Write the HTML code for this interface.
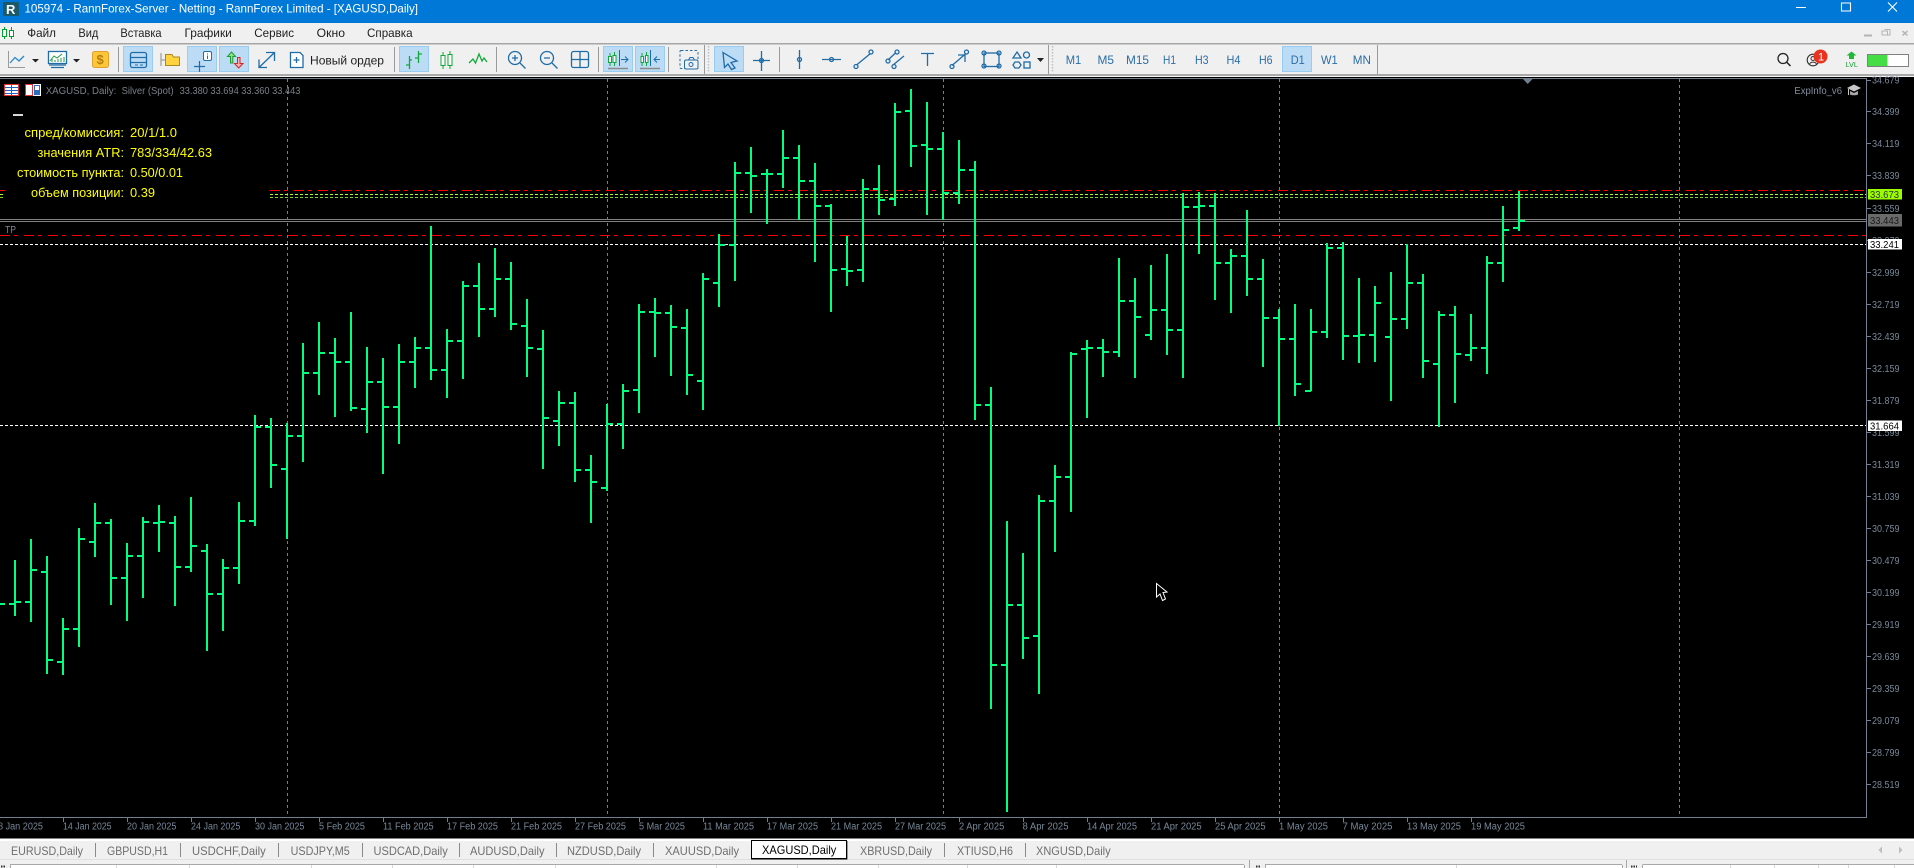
<!DOCTYPE html>
<html><head><meta charset="utf-8"><title>XAGUSD,Daily</title>
<style>
html,body{margin:0;padding:0;background:#000;width:1914px;height:868px;overflow:hidden}
svg{display:block;font-family:"Liberation Sans","DejaVu Sans",sans-serif}
.a{font-size:10px;fill:#778899}
.m{font-size:12px;fill:#1e1e1e}
.tf{font-size:12px;fill:#2b6ea8}
.t{font-size:12px;fill:#6e6e6e}
.y{font-size:13px;fill:#ffff00}
.ic{fill:none;stroke:#1f6ca8;stroke-width:1.3}
</style></head><body>
<svg width="1914" height="868" viewBox="0 0 1914 868" xmlns="http://www.w3.org/2000/svg">
<!-- title bar -->
<rect width="1914" height="23" fill="#0078d7"/>
<rect x="3" y="2" width="16" height="14" rx="1" fill="#1b5a6b"/>
<text x="6" y="14" font-size="13" font-weight="bold" fill="#fff">R</text>
<text x="24.5" y="12.5" font-size="12" fill="#fff" textLength="393.5" lengthAdjust="spacingAndGlyphs">105974 - RannForex-Server - Netting - RannForex Limited - [XAGUSD,Daily]</text>
<path d="M1796 7.5H1806M1841.5 3H1850.5V11H1841.5ZM1888 2.5L1897 11.5M1897 2.5L1888 11.5" stroke="#fff" stroke-width="1.1" fill="none"/>
<!-- menu -->
<rect y="23" width="1914" height="21" fill="#f0f0f0"/>
<rect y="43" width="1914" height="1.5" fill="#a6a6a6"/>
<path d="M4.5 27V39M11.5 27V39" stroke="#00a030"/><rect x="2.5" y="29.5" width="4" height="7" fill="#fff" stroke="#00a030"/><rect x="9.5" y="30.5" width="4" height="6" fill="#fff" stroke="#00a030"/>
<text class="m" x="27.3" y="37" textLength="28.7" lengthAdjust="spacingAndGlyphs">Файл</text>
<text class="m" x="78.4" y="37" textLength="20" lengthAdjust="spacingAndGlyphs">Вид</text>
<text class="m" x="120.4" y="37" textLength="41.2" lengthAdjust="spacingAndGlyphs">Вставка</text>
<text class="m" x="184.5" y="37" textLength="47.3" lengthAdjust="spacingAndGlyphs">Графики</text>
<text class="m" x="254.3" y="37" textLength="39.7" lengthAdjust="spacingAndGlyphs">Сервис</text>
<text class="m" x="316.7" y="37" textLength="28.3" lengthAdjust="spacingAndGlyphs">Окно</text>
<text class="m" x="367" y="37" textLength="45.6" lengthAdjust="spacingAndGlyphs">Справка</text>
<path d="M1864 35.5H1872" stroke="#b4b4b4" stroke-width="2"/><path d="M1884.5 29.5H1890V35H1882V31H1887.5V35" stroke="#b4b4b4" fill="none"/><path d="M1902.5 31L1907.5 35.5M1907.5 31L1902.5 35.5" stroke="#b4b4b4" stroke-width="1.5"/>
<!-- toolbar -->
<rect y="44.5" width="1914" height="30" fill="#f0f0f0"/>
<rect y="74" width="1914" height="2" fill="#a8a8a8"/>
<rect y="76" width="1914" height="1" fill="#f4f4f4"/>
<g fill="#bcdcf5" stroke="#98ccf2">
<rect x="123.5" y="46.5" width="29" height="25"/><rect x="187.5" y="46.5" width="29" height="25"/><rect x="219.5" y="46.5" width="29" height="25"/><rect x="399.5" y="46.5" width="29" height="25"/><rect x="603.5" y="46.5" width="29" height="25"/><rect x="635.5" y="46.5" width="29" height="25"/><rect x="714.5" y="46.5" width="29" height="25"/><rect x="1282.5" y="46.5" width="29" height="25"/>
</g>
<path d="M118.5 47V72M394.5 47V72M496.5 47V72M598.5 47V72M668.5 47V72M704.5 45V74M779.5 47V72M1048.5 45V74M1377.5 45V74" stroke="#9a9a9a"/>
<path d="M708.5 46V73M1052.5 46V73" stroke="#c0c0c0" stroke-width="1.5" stroke-dasharray="1.5 1.5"/>
<!-- line chart -->
<path d="M8.5 51V67.5H25" stroke="#9a9a9a" fill="none"/><path d="M10 63L15 57.5L19 61L24 56" stroke="#2a86cc" stroke-width="1.3" fill="none"/>
<path d="M32 59H39L35.5 62.5Z" fill="#222"/>
<!-- template -->
<rect x="48.5" y="51.5" width="18" height="12" fill="#fff" stroke="#1f6ca8" stroke-width="1.3"/><path d="M50 61L54 56L57 58L62 54" stroke="#1f9a40" fill="none"/><path d="M52 62V59M55 62V60M58 62V59M61 62V58M64 62V57" stroke="#1f9a40"/><path d="M49 65H66M51 67.5H64" stroke="#1f6ca8" stroke-width="1.3"/>
<path d="M73 59H80L76.5 62.5Z" fill="#222"/>
<!-- dollar -->
<rect x="92.5" y="51.5" width="16" height="16" rx="2" fill="#ffc738" stroke="#e0a030"/><text x="96.5" y="64" font-size="13" font-weight="bold" fill="#b57e10">$</text>
<!-- window -->
<rect x="130.5" y="52.5" width="16" height="15" rx="2" class="ic"/><path d="M130.5 57.5H146.5M130.5 62.5H146.5" class="ic"/><path d="M135 65H138M140 65H143" stroke="#1f6ca8"/>
<!-- folder -->
<path d="M161 53V66M161 60H165" stroke="#8c8c8c" fill="none"/><path d="M165.5 54.5H172L173.5 57H179.5V65.5H165.5Z" fill="#ffd23e" stroke="#a88a20"/>
<!-- cross i -->
<path d="M194 66.5H205M199.5 61V72" stroke="#1f6ca8" stroke-width="1.2"/><rect x="203.5" y="51.5" width="8" height="9" rx="1.5" fill="#fff" stroke="#1f6ca8"/><path d="M207.5 53.5V54.5M207.5 55.5V59" stroke="#1f6ca8"/>
<!-- green/red arrows -->
<path d="M230.5 63V56.5H227.5L231.5 52L235.5 56.5H232.8V63Z" fill="#8fe08f" stroke="#1c9a34" stroke-width="1"/><path d="M237.5 57.5V63.5H234.5L238.7 68L243 63.5H240V57.5Z" fill="#ffb0b0" stroke="#d02828" stroke-width="1"/>
<!-- resize -->
<path d="M259 67.5L274.5 52.5M266 52.5H274.5V61M259 59.5V67.5H267" class="ic"/>
<!-- new order -->
<path d="M290.5 52.5H300L303 55.5V67.5H290.5Z" fill="#fff" stroke="#1f6ca8" stroke-width="1.3"/><path d="M296.5 57V63M293.5 60H299.5" stroke="#1f6ca8" stroke-width="1.3"/>
<text x="310" y="64.5" font-size="12" fill="#1e1e1e" textLength="74" lengthAdjust="spacingAndGlyphs">Новый ордер</text>
<!-- bar type -->
<path d="M409.5 56V69M406 65H409.5M409.5 60H412M418.5 51V63M415 58H418.5M418.5 54H422" stroke="#12a838" stroke-width="1.3" fill="none"/>
<path d="M443 52V69M450 51V69" stroke="#12a838"/><rect x="441" y="55.5" width="4" height="10" fill="#fff" stroke="#12a838"/><rect x="448" y="54.5" width="4" height="11" fill="#fff" stroke="#12a838"/>
<path d="M469 63L473 59L475.5 63L479 54L482 61L484 58L487 62" stroke="#12a838" stroke-width="1.3" fill="none"/>
<!-- zoom -->
<circle cx="515" cy="58" r="6.5" class="ic"/><path d="M520 63L525.5 68.5M512 58H518M515 55V61" class="ic"/>
<circle cx="547" cy="58" r="6.5" class="ic"/><path d="M552 63L557.5 68.5M544 58H550" class="ic"/>
<rect x="571.5" y="51.5" width="17" height="16" rx="2" fill="#fff" class="ic"/><path d="M580 51.5V67.5M571.5 59.5H588.5" class="ic"/>
<!-- autoscroll -->
<path d="M610 53V66M614.5 52V66" stroke="#12a838"/><rect x="608.5" y="56.5" width="3" height="6" fill="#fff" stroke="#12a838"/><rect x="613" y="55.5" width="3" height="7" fill="#fff" stroke="#12a838"/><path d="M619.5 50V66M621 59.5H628M625 56.5L628 59.5L625 62.5" stroke="#1f6ca8" fill="none"/><path d="M608 68.5H628" stroke="#8c8c8c" stroke-width="1.5"/>
<path d="M642 53V66M646.5 52V66" stroke="#12a838"/><rect x="641" y="56.5" width="2.5" height="6" fill="#fff" stroke="#12a838"/><rect x="645.5" y="55.5" width="2.5" height="7" fill="#fff" stroke="#12a838"/><path d="M650.5 50V66M654 59.5H660M657 56.5L654 59.5L657 62.5" stroke="#1f6ca8" fill="none"/><path d="M640 68.5H660" stroke="#8c8c8c" stroke-width="1.5"/>
<!-- camera -->
<rect x="680" y="50.5" width="18" height="18" rx="1" fill="none" stroke="#1f6ca8" stroke-dasharray="2.5 2"/><rect x="684.5" y="60" width="13.5" height="9" rx="1.5" fill="#f0f0f0" stroke="#1f6ca8"/><circle cx="691" cy="64.5" r="2" fill="none" stroke="#1f6ca8"/><path d="M688.5 60L690 57.5H693L694.5 60" fill="none" stroke="#1f6ca8"/>
<!-- cursor -->
<path d="M723 52.5L737 61L731 62.5L735 68L731.5 69.5L728 64L724.5 67.5Z" fill="#bcdcf5" class="ic"/>
<!-- crosshair -->
<path d="M761.5 51V71M753 60.5H770" class="ic"/><circle cx="761.5" cy="60.5" r="2" fill="#f0f0f0" class="ic"/>
<!-- vertical, horizontal -->
<path d="M799.5 50V69" class="ic"/><circle cx="799.5" cy="59.5" r="2" fill="#9cc8ea" class="ic"/>
<path d="M822 59.5H841" class="ic"/><circle cx="831.5" cy="59.5" r="2" fill="#9cc8ea" class="ic"/>
<!-- trend -->
<path d="M856.5 65L870.5 53.5" class="ic"/><circle cx="856" cy="66.5" r="2" fill="#9cc8ea" class="ic"/><circle cx="871" cy="52" r="2" fill="#9cc8ea" class="ic"/>
<!-- channel -->
<path d="M888 60L896 52.5M893 65L904 56" class="ic"/><circle cx="888" cy="61" r="2" fill="#9cc8ea" class="ic"/><circle cx="897" cy="52" r="2" fill="#9cc8ea" class="ic"/><circle cx="894" cy="66.5" r="2" fill="#9cc8ea" class="ic"/>
<!-- T -->
<path d="M921 53.5H934M927.5 53.5V66" class="ic"/>
<!-- arrow line -->
<path d="M952 65.5L966 53.5M958 55H965V62" class="ic"/><circle cx="952" cy="66.5" r="2" fill="#9cc8ea" class="ic"/><circle cx="966.5" cy="52" r="2" fill="#9cc8ea" class="ic"/>
<!-- rect -->
<rect x="984" y="53" width="15" height="13.5" class="ic"/><g fill="#9cc8ea" class="ic"><circle cx="984" cy="53" r="2"/><circle cx="999" cy="53" r="2"/><circle cx="984" cy="66" r="2"/><circle cx="999" cy="66" r="2"/></g>
<!-- shapes -->
<path d="M1017 52L1021 58H1013Z" class="ic"/><circle cx="1026.5" cy="55" r="3" class="ic"/><path d="M1015 62H1019L1021 65L1019 68H1015L1013 65Z" class="ic"/><rect x="1024" y="62" width="6" height="6" class="ic"/>
<path d="M1037 58H1044L1040.5 62Z" fill="#222"/>
<!-- timeframes -->
<text class="tf" x="1065.7" y="64" textLength="15.5" lengthAdjust="spacingAndGlyphs">M1</text>
<text class="tf" x="1097.5" y="64" textLength="16.5" lengthAdjust="spacingAndGlyphs">M5</text>
<text class="tf" x="1126" y="64" textLength="23" lengthAdjust="spacingAndGlyphs">M15</text>
<text class="tf" x="1163" y="64" textLength="13" lengthAdjust="spacingAndGlyphs">H1</text>
<text class="tf" x="1195" y="64" textLength="13.6" lengthAdjust="spacingAndGlyphs">H3</text>
<text class="tf" x="1226.5" y="64" textLength="14" lengthAdjust="spacingAndGlyphs">H4</text>
<text class="tf" x="1259" y="64" textLength="13.6" lengthAdjust="spacingAndGlyphs">H6</text>
<text class="tf" x="1290.7" y="64" textLength="14" lengthAdjust="spacingAndGlyphs">D1</text>
<text class="tf" x="1321" y="64" textLength="16.7" lengthAdjust="spacingAndGlyphs">W1</text>
<text class="tf" x="1352.8" y="64" textLength="18.2" lengthAdjust="spacingAndGlyphs">MN</text>
<!-- right side -->
<circle cx="1783" cy="58.5" r="5" fill="none" stroke="#222" stroke-width="1.3"/><path d="M1786.5 62L1790.5 66" stroke="#222" stroke-width="1.5"/>
<circle cx="1813" cy="60" r="5.8" fill="none" stroke="#333" stroke-width="1.1"/><circle cx="1813" cy="58.5" r="2" fill="none" stroke="#333"/><path d="M1809.5 64C1811 61.5 1815 61.5 1816.5 64" fill="none" stroke="#333"/>
<circle cx="1820.5" cy="56.5" r="7" fill="#e8341f"/><text x="1818" y="60.5" font-size="11" fill="#fff">1</text>
<path d="M1849 59V55.5H1846.5L1851.5 51.5L1856.5 55.5H1854V59Z" fill="#20b838"/><text x="1845.5" y="67" font-size="7.5" fill="#14a030" textLength="12.5" lengthAdjust="spacingAndGlyphs">LVL</text>
<rect x="1867.5" y="54.5" width="41" height="12" fill="#fff" stroke="#808080"/><rect x="1868" y="55" width="19.5" height="11" fill="#44dd44"/>

<!-- chart -->
<rect y="77" width="1914" height="761.5" fill="#000"/>
<path d="M0 78.5H1866.5V817.5H0" fill="none" stroke="#708090"/>
<g stroke="#708090" stroke-dasharray="3 3"><path d="M287.5 79V817M607.5 79V817M943.5 79V817M1279.5 79V817M1679.5 79V817"/></g>
<path d="M1523 79H1532.5L1527.7 84Z" fill="#708090"/>
<!-- hlines -->
<path d="M0 190.5H5M270 190.5H1866" stroke="#f00" stroke-dasharray="10 4 4 6"/>
<path d="M0 194.5H3M270 194.5H1866" stroke="#adff2f" stroke-dasharray="3 2"/>
<path d="M0 197.5H3M270 197.5H1866" stroke="#74d420" stroke-dasharray="3 2"/>
<path d="M0 219.5H1866M0 221.5H1866" stroke="#808080"/>
<path d="M0 235.5H1866" stroke="#f00" stroke-dasharray="10 4 4 6"/>
<path d="M0 244.5H1866M0 425.5H1866" stroke="#fff" stroke-dasharray="3 2"/>
<!-- bars -->
<path fill="none" stroke="#00ff7f" stroke-width="2" d="M-1 604H5
M15 560V616M9 604H15M15 602H21
M31 539V622M25 602H31M31 570H37
M47 556V674M41 572H47M47 660H53
M63 618V675M57 662H63M63 629H69
M79 528V647M73 629H79M79 539H85
M95 503V557M89 542H95M95 523H101
M111 519V605M105 523H111M111 578H117
M127 543V621M121 578H127M127 556H133
M143 517V598M137 556H143M143 522H149
M159 505V552M153 523H159M159 522H165
M175 516V606M169 523H175M175 567H181
M191 497V572M185 567H191M191 546H197
M207 544V651M201 551H207M207 594H213
M223 559V631M217 594H223M223 568H229
M239 502V584M233 568H239M239 521H245
M255 415V526M249 521H255M255 427H261
M271 418V488M265 427H271M271 465H277
M287 423V539M281 469H287M287 436H293
M303 343V462M297 436H303M303 373H309
M319 322V395M313 373H319M319 353H325
M335 338V417M329 353H335M335 362H341
M351 312V411M345 362H351M351 408H357
M367 347V433M361 409H367M367 382H373
M383 358V474M377 382H383M383 407H389
M399 344V444M393 407H399M399 362H405
M415 337V388M409 362H415M415 348H421
M431 226V380M425 348H431M431 370H437
M447 329V398M441 370H447M447 341H453
M463 281V379M457 341H463M463 286H469
M479 263V337M473 286H479M479 309H485
M495 248V317M489 309H495M495 279H501
M511 262V330M505 279H511M511 324H517
M527 299V377M521 326H527M527 348H533
M543 330V469M537 349H543M543 418H549
M559 391V446M553 421H559M559 403H565
M575 392V482M569 403H575M575 470H581
M591 455V523M585 470H591M591 482H597
M607 404V491M601 488H607M607 424H613
M623 384V449M617 424H623M623 391H629
M639 304V413M633 390H639M639 312H645
M655 298V357M649 312H655M655 313H661
M671 305V376M665 313H671M671 327H677
M687 309V395M681 328H687M687 375H693
M703 273V410M697 381H703M703 279H709
M719 234V307M713 283H719M719 245H725
M735 162V281M729 245H735M735 173H741
M751 147V213M745 173H751M751 176H757
M767 169V224M761 174H767M767 174H773
M783 130V188M777 174H783M783 158H789
M799 145V220M793 158H799M799 181H805
M815 163V262M809 181H815M815 206H821
M831 204V312M825 206H831M831 270H837
M847 236V286M841 269H847M847 271H853
M863 179V282M857 270H863M863 189H869
M879 165V215M873 189H879M879 200H885
M895 103V206M889 199H895M895 112H901
M911 89V167M905 111H911M911 146H917
M927 102V215M921 145H927M927 149H933
M943 132V220M937 149H943M943 193H949
M959 140V204M953 193H959M959 170H965
M975 161V420M969 170H975M975 405H981
M991 387V709M985 405H991M991 665H997
M1007 521V812M1001 665H1007M1007 605H1013
M1023 553V659M1017 605H1023M1023 638H1029
M1039 495V694M1033 636H1039M1039 501H1045
M1055 465V552M1049 501H1055M1055 477H1061
M1071 352V512M1065 477H1071M1071 354H1077
M1087 340V418M1081 349H1087M1087 348H1093
M1103 339V377M1097 348H1103M1103 352H1109
M1119 258V357M1113 352H1119M1119 301H1125
M1135 278V378M1129 301H1135M1135 317H1141
M1151 265V340M1145 335H1151M1151 310H1157
M1167 254V355M1161 310H1167M1167 330H1173
M1183 193V378M1177 330H1183M1183 207H1189
M1199 192V254M1193 207H1199M1199 206H1205
M1215 193V300M1209 206H1215M1215 263H1221
M1231 249V313M1225 263H1231M1231 256H1237
M1247 210V296M1241 256H1247M1247 279H1253
M1263 259V367M1257 279H1263M1263 318H1269
M1279 309V426M1273 318H1279M1279 339H1285
M1295 304V396M1289 339H1295M1295 384H1301
M1311 309V391M1305 391H1311M1311 332H1317
M1327 243V338M1321 332H1327M1327 248H1333
M1343 242V360M1337 248H1343M1343 336H1349
M1359 278V363M1353 336H1359M1359 335H1365
M1375 286V362M1369 335H1375M1375 303H1381
M1391 272V401M1385 337H1391M1391 319H1397
M1407 244V329M1401 319H1407M1407 283H1413
M1423 274V378M1417 283H1423M1423 361H1429
M1439 311V427M1433 364H1439M1439 315H1445
M1455 306V403M1449 315H1455M1455 354H1461
M1471 314V361M1465 355H1471M1471 348H1477
M1487 256V374M1481 348H1487M1487 263H1493
M1503 206V282M1497 263H1503M1503 230H1509
M1519 191V231M1513 228H1519M1519 221H1525"/>
<!-- header icons -->
<rect x="4.5" y="84.5" width="14" height="11" fill="#fff" stroke="#e03030"/><path d="M5 87.5H18M5 90.5H18M5 93.5H18M11.5 85V95" stroke="#2060c0"/>
<rect x="25.5" y="84.5" width="7" height="11" fill="#fff" stroke="#e03030"/><rect x="33.5" y="84.5" width="7" height="11" fill="#2a70c0" stroke="#fff"/><rect x="35" y="86" width="4" height="4" fill="#fff"/>
<text x="45.7" y="94" font-size="10" fill="#7a8088" textLength="70.6" lengthAdjust="spacingAndGlyphs">XAGUSD, Daily:</text>
<text x="121.6" y="94" font-size="10" fill="#7a8088" textLength="52" lengthAdjust="spacingAndGlyphs">Silver (Spot)</text>
<text x="179.6" y="94" font-size="10" fill="#7a8088" textLength="120.8" lengthAdjust="spacingAndGlyphs">33.380 33.694 33.360 33.443</text>
<!-- top right -->
<text x="1794.4" y="94" font-size="10" fill="#8390a0" textLength="47.6" lengthAdjust="spacingAndGlyphs">ExpInfo_v6</text>
<path d="M1847 88L1854 84.5L1861 88L1854 91.5Z" fill="#c8c8c8"/><path d="M1850 91V94.5C1852 95.5 1856 95.5 1858 94.5V91L1854 93Z" fill="#a8a8a8"/><path d="M1848.5 89V95" stroke="#c8c8c8"/>
<!-- info -->
<rect x="13" y="114" width="10" height="2" fill="#d8d8d8"/>
<text class="y" x="24.5" y="137" textLength="99.5" lengthAdjust="spacingAndGlyphs">спред/комиссия:</text><text class="y" x="130" y="137" textLength="47" lengthAdjust="spacingAndGlyphs">20/1/1.0</text>
<text class="y" x="37.5" y="157" textLength="86.5" lengthAdjust="spacingAndGlyphs">значения ATR:</text><text class="y" x="130" y="157" textLength="82" lengthAdjust="spacingAndGlyphs">783/334/42.63</text>
<text class="y" x="17" y="177" textLength="107" lengthAdjust="spacingAndGlyphs">стоимость пункта:</text><text class="y" x="130" y="177" textLength="53" lengthAdjust="spacingAndGlyphs">0.50/0.01</text>
<text class="y" x="31" y="197" textLength="93" lengthAdjust="spacingAndGlyphs">объем позиции:</text><text class="y" x="130" y="197" textLength="25" lengthAdjust="spacingAndGlyphs">0.39</text>
<text x="5" y="233" font-size="10" fill="#808890" textLength="11" lengthAdjust="spacingAndGlyphs">TP</text>
<!-- price axis -->
<path stroke="#708090" d="M1867 80.5H1871M1867 111.5H1871M1867 143.5H1871M1867 175.5H1871M1867 208.5H1871M1867 240.5H1871M1867 272.5H1871M1867 304.5H1871M1867 336.5H1871M1867 368.5H1871M1867 400.5H1871M1867 432.5H1871M1867 464.5H1871M1867 496.5H1871M1867 528.5H1871M1867 560.5H1871M1867 592.5H1871M1867 624.5H1871M1867 656.5H1871M1867 688.5H1871M1867 720.5H1871M1867 752.5H1871M1867 784.5H1871"/>
<g class="a">
<text class="a" x="1872" y="83.5" textLength="27.5" lengthAdjust="spacingAndGlyphs">34.679</text>
<text class="a" x="1872" y="115" textLength="27.5" lengthAdjust="spacingAndGlyphs">34.399</text>
<text class="a" x="1872" y="147" textLength="27.5" lengthAdjust="spacingAndGlyphs">34.119</text>
<text class="a" x="1872" y="179" textLength="27.5" lengthAdjust="spacingAndGlyphs">33.839</text>
<text class="a" x="1872" y="212" textLength="27.5" lengthAdjust="spacingAndGlyphs">33.559</text>
<text class="a" x="1872" y="244" textLength="27.5" lengthAdjust="spacingAndGlyphs">33.279</text>
<text class="a" x="1872" y="276" textLength="27.5" lengthAdjust="spacingAndGlyphs">32.999</text>
<text class="a" x="1872" y="308" textLength="27.5" lengthAdjust="spacingAndGlyphs">32.719</text>
<text class="a" x="1872" y="340" textLength="27.5" lengthAdjust="spacingAndGlyphs">32.439</text>
<text class="a" x="1872" y="372" textLength="27.5" lengthAdjust="spacingAndGlyphs">32.159</text>
<text class="a" x="1872" y="404" textLength="27.5" lengthAdjust="spacingAndGlyphs">31.879</text>
<text class="a" x="1872" y="436" textLength="27.5" lengthAdjust="spacingAndGlyphs">31.599</text>
<text class="a" x="1872" y="468" textLength="27.5" lengthAdjust="spacingAndGlyphs">31.319</text>
<text class="a" x="1872" y="500" textLength="27.5" lengthAdjust="spacingAndGlyphs">31.039</text>
<text class="a" x="1872" y="532" textLength="27.5" lengthAdjust="spacingAndGlyphs">30.759</text>
<text class="a" x="1872" y="564" textLength="27.5" lengthAdjust="spacingAndGlyphs">30.479</text>
<text class="a" x="1872" y="596" textLength="27.5" lengthAdjust="spacingAndGlyphs">30.199</text>
<text class="a" x="1872" y="628" textLength="27.5" lengthAdjust="spacingAndGlyphs">29.919</text>
<text class="a" x="1872" y="660" textLength="27.5" lengthAdjust="spacingAndGlyphs">29.639</text>
<text class="a" x="1872" y="692" textLength="27.5" lengthAdjust="spacingAndGlyphs">29.359</text>
<text class="a" x="1872" y="724" textLength="27.5" lengthAdjust="spacingAndGlyphs">29.079</text>
<text class="a" x="1872" y="756" textLength="27.5" lengthAdjust="spacingAndGlyphs">28.799</text>
<text class="a" x="1872" y="788" textLength="27.5" lengthAdjust="spacingAndGlyphs">28.519</text>
</g>
<!-- price boxes -->
<rect x="1868" y="189" width="34" height="10.5" fill="#99ff00"/><text x="1870" y="198" font-size="10" fill="#333" textLength="29" lengthAdjust="spacingAndGlyphs">33.673</text>
<rect x="1868" y="214" width="34" height="12.5" fill="#6a6a6a"/><text x="1870" y="224" font-size="10" fill="#1a1a1a" textLength="29" lengthAdjust="spacingAndGlyphs">33.443</text>
<rect x="1868" y="239" width="34" height="10.5" fill="#fff"/><text x="1870" y="248" font-size="10" fill="#000" textLength="29" lengthAdjust="spacingAndGlyphs">33.241</text>
<rect x="1868" y="420.5" width="34" height="10.5" fill="#fff"/><text x="1870" y="429.5" font-size="10" fill="#000" textLength="29" lengthAdjust="spacingAndGlyphs">31.664</text>
<!-- time axis -->
<path stroke="#708090" d="M63.5 817V822M127.5 817V822M191.5 817V822M255.5 817V822M319.5 817V822M383.5 817V822M447.5 817V822M511.5 817V822M575.5 817V822M639.5 817V822M703.5 817V822M767.5 817V822M831.5 817V822M895.5 817V822M959.5 817V822M1023.5 817V822M1087.5 817V822M1151.5 817V822M1215.5 817V822M1279.5 817V822M1343.5 817V822M1407.5 817V822M1471.5 817V822"/>
<text class="a" x="-2" y="829.5" textLength="45" lengthAdjust="spacingAndGlyphs">8 Jan 2025</text>
<text class="a" x="63" y="829.5" textLength="48.6" lengthAdjust="spacingAndGlyphs">14 Jan 2025</text>
<text class="a" x="127" y="829.5" textLength="49.4" lengthAdjust="spacingAndGlyphs">20 Jan 2025</text>
<text class="a" x="191" y="829.5" textLength="49.4" lengthAdjust="spacingAndGlyphs">24 Jan 2025</text>
<text class="a" x="255" y="829.5" textLength="49.4" lengthAdjust="spacingAndGlyphs">30 Jan 2025</text>
<text class="a" x="319" y="829.5" textLength="46" lengthAdjust="spacingAndGlyphs">5 Feb 2025</text>
<text class="a" x="383" y="829.5" textLength="50.6" lengthAdjust="spacingAndGlyphs">11 Feb 2025</text>
<text class="a" x="447" y="829.5" textLength="51" lengthAdjust="spacingAndGlyphs">17 Feb 2025</text>
<text class="a" x="511" y="829.5" textLength="51" lengthAdjust="spacingAndGlyphs">21 Feb 2025</text>
<text class="a" x="575" y="829.5" textLength="51" lengthAdjust="spacingAndGlyphs">27 Feb 2025</text>
<text class="a" x="639" y="829.5" textLength="46" lengthAdjust="spacingAndGlyphs">5 Mar 2025</text>
<text class="a" x="703" y="829.5" textLength="51" lengthAdjust="spacingAndGlyphs">11 Mar 2025</text>
<text class="a" x="767" y="829.5" textLength="51" lengthAdjust="spacingAndGlyphs">17 Mar 2025</text>
<text class="a" x="831" y="829.5" textLength="51" lengthAdjust="spacingAndGlyphs">21 Mar 2025</text>
<text class="a" x="895" y="829.5" textLength="51" lengthAdjust="spacingAndGlyphs">27 Mar 2025</text>
<text class="a" x="959" y="829.5" textLength="45.3" lengthAdjust="spacingAndGlyphs">2 Apr 2025</text>
<text class="a" x="1022.5" y="829.5" textLength="46" lengthAdjust="spacingAndGlyphs">8 Apr 2025</text>
<text class="a" x="1087" y="829.5" textLength="50" lengthAdjust="spacingAndGlyphs">14 Apr 2025</text>
<text class="a" x="1151" y="829.5" textLength="50.6" lengthAdjust="spacingAndGlyphs">21 Apr 2025</text>
<text class="a" x="1215" y="829.5" textLength="50.6" lengthAdjust="spacingAndGlyphs">25 Apr 2025</text>
<text class="a" x="1279" y="829.5" textLength="49" lengthAdjust="spacingAndGlyphs">1 May 2025</text>
<text class="a" x="1342.5" y="829.5" textLength="50" lengthAdjust="spacingAndGlyphs">7 May 2025</text>
<text class="a" x="1407" y="829.5" textLength="54" lengthAdjust="spacingAndGlyphs">13 May 2025</text>
<text class="a" x="1471" y="829.5" textLength="54" lengthAdjust="spacingAndGlyphs">19 May 2025</text>
<!-- cursor -->
<path d="M1156.5 583.5V597L1160 594L1162.5 600.5L1165.5 599L1163 592.5L1167 592Z" fill="#000" stroke="#fff"/>
<!-- tabs -->
<rect y="838.5" width="1914" height="2.5" fill="#fff"/>
<rect y="841" width="1914" height="18" fill="#f0f0f0"/>
<rect y="859" width="1914" height="9" fill="#f0f0f0"/>
<rect y="859" width="1914" height="1" fill="#e0e0e0"/>
<path stroke="#8a8a8a" d="M95.5 843V857M180.5 843V857M278.5 843V857M362.5 843V857M459.5 843V857M556.5 843V857M653.5 843V857M944.5 843V857M1025.5 843V857"/>
<text class="t" x="11" y="855" textLength="72" lengthAdjust="spacingAndGlyphs">EURUSD,Daily</text>
<text class="t" x="107" y="855" textLength="61" lengthAdjust="spacingAndGlyphs">GBPUSD,H1</text>
<text class="t" x="192" y="855" textLength="73.7" lengthAdjust="spacingAndGlyphs">USDCHF,Daily</text>
<text class="t" x="290.6" y="855" textLength="59.2" lengthAdjust="spacingAndGlyphs">USDJPY,M5</text>
<text class="t" x="373.5" y="855" textLength="74.3" lengthAdjust="spacingAndGlyphs">USDCAD,Daily</text>
<text class="t" x="470" y="855" textLength="74.5" lengthAdjust="spacingAndGlyphs">AUDUSD,Daily</text>
<text class="t" x="567" y="855" textLength="74" lengthAdjust="spacingAndGlyphs">NZDUSD,Daily</text>
<text class="t" x="665" y="855" textLength="74" lengthAdjust="spacingAndGlyphs">XAUUSD,Daily</text>
<path d="M751.5 858.5V840.5H846.5V858" fill="#fff" stroke="#000"/><rect x="751" y="858" width="97" height="1.5" fill="#000"/><path d="M847.5 841V859.5" stroke="#9a9a9a"/>
<text x="762" y="854" font-size="12" fill="#000" textLength="74.3" lengthAdjust="spacingAndGlyphs">XAGUSD,Daily</text>
<text class="t" x="860" y="855" textLength="72" lengthAdjust="spacingAndGlyphs">XBRUSD,Daily</text>
<text class="t" x="957" y="855" textLength="56" lengthAdjust="spacingAndGlyphs">XTIUSD,H6</text>
<text class="t" x="1036" y="855" textLength="74.6" lengthAdjust="spacingAndGlyphs">XNGUSD,Daily</text>
<path d="M1882 846.5V853.5L1878.5 850ZM1899 846.5V853.5L1902.5 850Z" fill="#bdbdbd"/>
<!-- bottom header -->
<rect x="10" y="865" width="1234" height="3" fill="#fff"/><rect x="1265" y="865" width="357" height="3" fill="#fff"/><rect x="1642.5" y="865" width="272" height="3" fill="#fff"/>
<path d="M10 864.5H1244M1265 864.5H1622M1642.5 864.5H1914" stroke="#a8a8a8"/>
<path stroke="#d8d8d8" d="M116.5 865V868M189.5 865V868M311.5 865V868M392.5 865V868M473.5 865V868M555.5 865V868M716.5 865V868M797.5 865V868M878.5 865V868M967.5 865V868M1056.5 865V868M1456.5 865V868M1730.5 865V868M1774.5 865V868M1818.5 865V868M1848.5 865V868M1894.5 865V868"/>
<path d="M10.5 865V868M1244.5 865V868M1265.5 865V868M1622.5 865V868M1642.5 865V868M1249.5 860V868M1626.5 860V868" stroke="#a8a8a8"/>
<path d="M1 866.5H5M1256 866.5H1260M1631 866.5H1637" stroke="#333" stroke-width="2" stroke-dasharray="1.5 1"/>
</svg>
</body></html>
